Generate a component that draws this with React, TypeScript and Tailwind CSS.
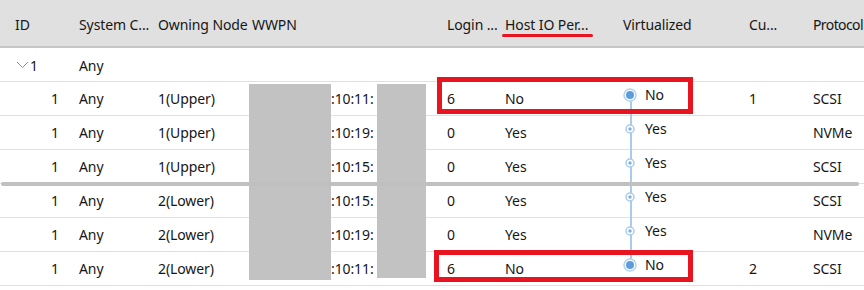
import React from "react";

interface Row {
  id: string;
  system: string;
  node: string;
  wwpn: string;
  login: string;
  hostIo: string;
  virt: string;
  cu: string;
  protocol: string;
}

const rows: Array<Row> = [
  { id: "1", system: "Any", node: "1(Upper)", wwpn: ":10:11:", login: "6", hostIo: "No", virt: "No", cu: "1", protocol: "SCSI" },
  { id: "1", system: "Any", node: "1(Upper)", wwpn: ":10:19:", login: "0", hostIo: "Yes", virt: "Yes", cu: "", protocol: "NVMe" },
  { id: "1", system: "Any", node: "1(Upper)", wwpn: ":10:15:", login: "0", hostIo: "Yes", virt: "Yes", cu: "", protocol: "SCSI" },
  { id: "1", system: "Any", node: "2(Lower)", wwpn: ":10:15:", login: "0", hostIo: "Yes", virt: "Yes", cu: "", protocol: "SCSI" },
  { id: "1", system: "Any", node: "2(Lower)", wwpn: ":10:19:", login: "0", hostIo: "Yes", virt: "Yes", cu: "", protocol: "NVMe" },
  { id: "1", system: "Any", node: "2(Lower)", wwpn: ":10:11:", login: "6", hostIo: "No", virt: "No", cu: "2", protocol: "SCSI" },
];

const cols = [
  "w-[71px] shrink-0",
  "w-[79px] shrink-0",
  "w-[94px] shrink-0",
  "w-[195px] shrink-0",
  "w-[58px] shrink-0",
  "w-[118px] shrink-0",
  "w-[126px] shrink-0",
  "w-[64px] shrink-0",
  "w-[51px] shrink-0",
];

const Marker = ({ big }: { big: boolean }) =>
  big ? (
    <svg width="14" height="14" viewBox="0 0 14 14" className="shrink-0 relative">
      <circle cx="7" cy="7" r="6" fill="white" stroke="#b5d2ef" strokeWidth="1.5" />
      <circle cx="7" cy="7" r="4" fill="#5d9ddb" />
    </svg>
  ) : (
    <svg width="14" height="14" viewBox="0 0 14 14" className="shrink-0 relative">
      <circle cx="7" cy="7" r="4" fill="white" stroke="#a9cbee" strokeWidth="1.5" />
      <circle cx="7" cy="7" r="1.7" fill="#7eb0e3" />
    </svg>
  );

export default function App() {
  return (
    <div
      className="relative w-[864px] h-[290px] overflow-hidden bg-white text-[14px] text-[#161616] tracking-[-0.1px]"
      style={{ fontFamily: '"Noto Sans", "Open Sans", sans-serif' }}
    >
      {/* timeline connector, behind the markers */}
      <div className="absolute left-[630px] top-[99px] w-[1.5px] h-[160px] bg-[#a9cbee]" />

      {/* header */}
      <div className="relative flex h-[48px] pt-[3px] bg-[#e0e0e0] border-b-2 border-[#c6c6c6] whitespace-nowrap">
        <div className={`${cols[0]} pl-[15px] flex items-center`}>ID</div>
        <div className={`${cols[1]} pl-[8px] flex items-center`}>System C...</div>
        <div className={`${cols[2]} pl-[8px] flex items-center`}>Owning Node</div>
        <div className={`${cols[3]} pl-[8px] flex items-center`}>WWPN</div>
        <div className={`${cols[4]} pl-[8px] flex items-center`}>Login ...</div>
        <div className={`${cols[5]} pl-[8px] flex items-center`}>
          <span className="relative">
            Host IO Per...
            <span className="absolute left-[-3px] right-[-5px] top-[20px] h-[3px] rounded-full bg-[#e8141f]" />
          </span>
        </div>
        <div className={`${cols[6]} pl-[8px] flex items-center`}>Virtualized</div>
        <div className={`${cols[7]} pl-[8px] flex items-center`}>Cu...</div>
        <div className={`${cols[8]} pl-[8px] flex items-center tracking-[-0.6px]`}>Protocol</div>
      </div>

      {/* group row */}
      <div className="flex h-[34px] border-b border-[#e0e0e0] items-center pt-[1px]">
        <div className={`${cols[0]} pl-[16px] flex items-center gap-[1px]`}>
          <svg width="13" height="8" viewBox="0 0 13 8" className="mt-[-1px]">
            <path d="M1 1 L6.5 6.5 L12 1" fill="none" stroke="#8d8d8d" strokeWidth="1" />
          </svg>
          <span>1</span>
        </div>
        <div className={`${cols[1]} pl-[8px]`}>Any</div>
      </div>

      {rows.map((r, i) => (
        <div key={i} className="flex h-[34px] border-b border-[#e0e0e0] items-center whitespace-nowrap">
          <div className={`${cols[0]} pr-[12px] text-right`}>{r.id}</div>
          <div className={`${cols[1]} pl-[8px]`}>{r.system}</div>
          <div className={`${cols[2]} pl-[8px]`}>{r.node}</div>
          <div className={`${cols[3]} pl-[87px]`}>{r.wwpn}</div>
          <div className={`${cols[4]} pl-[8px]`}>{r.login}</div>
          <div className={`${cols[5]} pl-[8px]`}>{r.hostIo}</div>
          <div className={`${cols[6]} pl-[8px] flex items-center gap-[8px] -translate-y-[4px]`}>
            <Marker big={r.virt === "No"} />
            <span>{r.virt}</span>
          </div>
          <div className={`${cols[7]} pl-[8px]`}>{r.cu}</div>
          <div className={`${cols[8]} pl-[8px]`}>{r.protocol}</div>
        </div>
      ))}

      {/* redaction blocks */}
      <div className="absolute left-[249px] top-[84px] w-[82px] h-[196px] bg-[#c2c2c2]" />
      <div className="absolute left-[377px] top-[84px] w-[49px] h-[194px] bg-[#c2c2c2]" />

      {/* split divider */}
      <div className="absolute left-[1px] top-[182px] w-[858px] h-[4px] rounded-full bg-[#c0c0c0]" />

      {/* annotation boxes */}
      <div className="absolute left-[437px] top-[77px] w-[256px] h-[37px] border-[5px] border-[#e8141f]" />
      <div className="absolute left-[434px] top-[250px] w-[259px] h-[32px] border-[5px] border-[#e8141f]" />
    </div>
  );
}
